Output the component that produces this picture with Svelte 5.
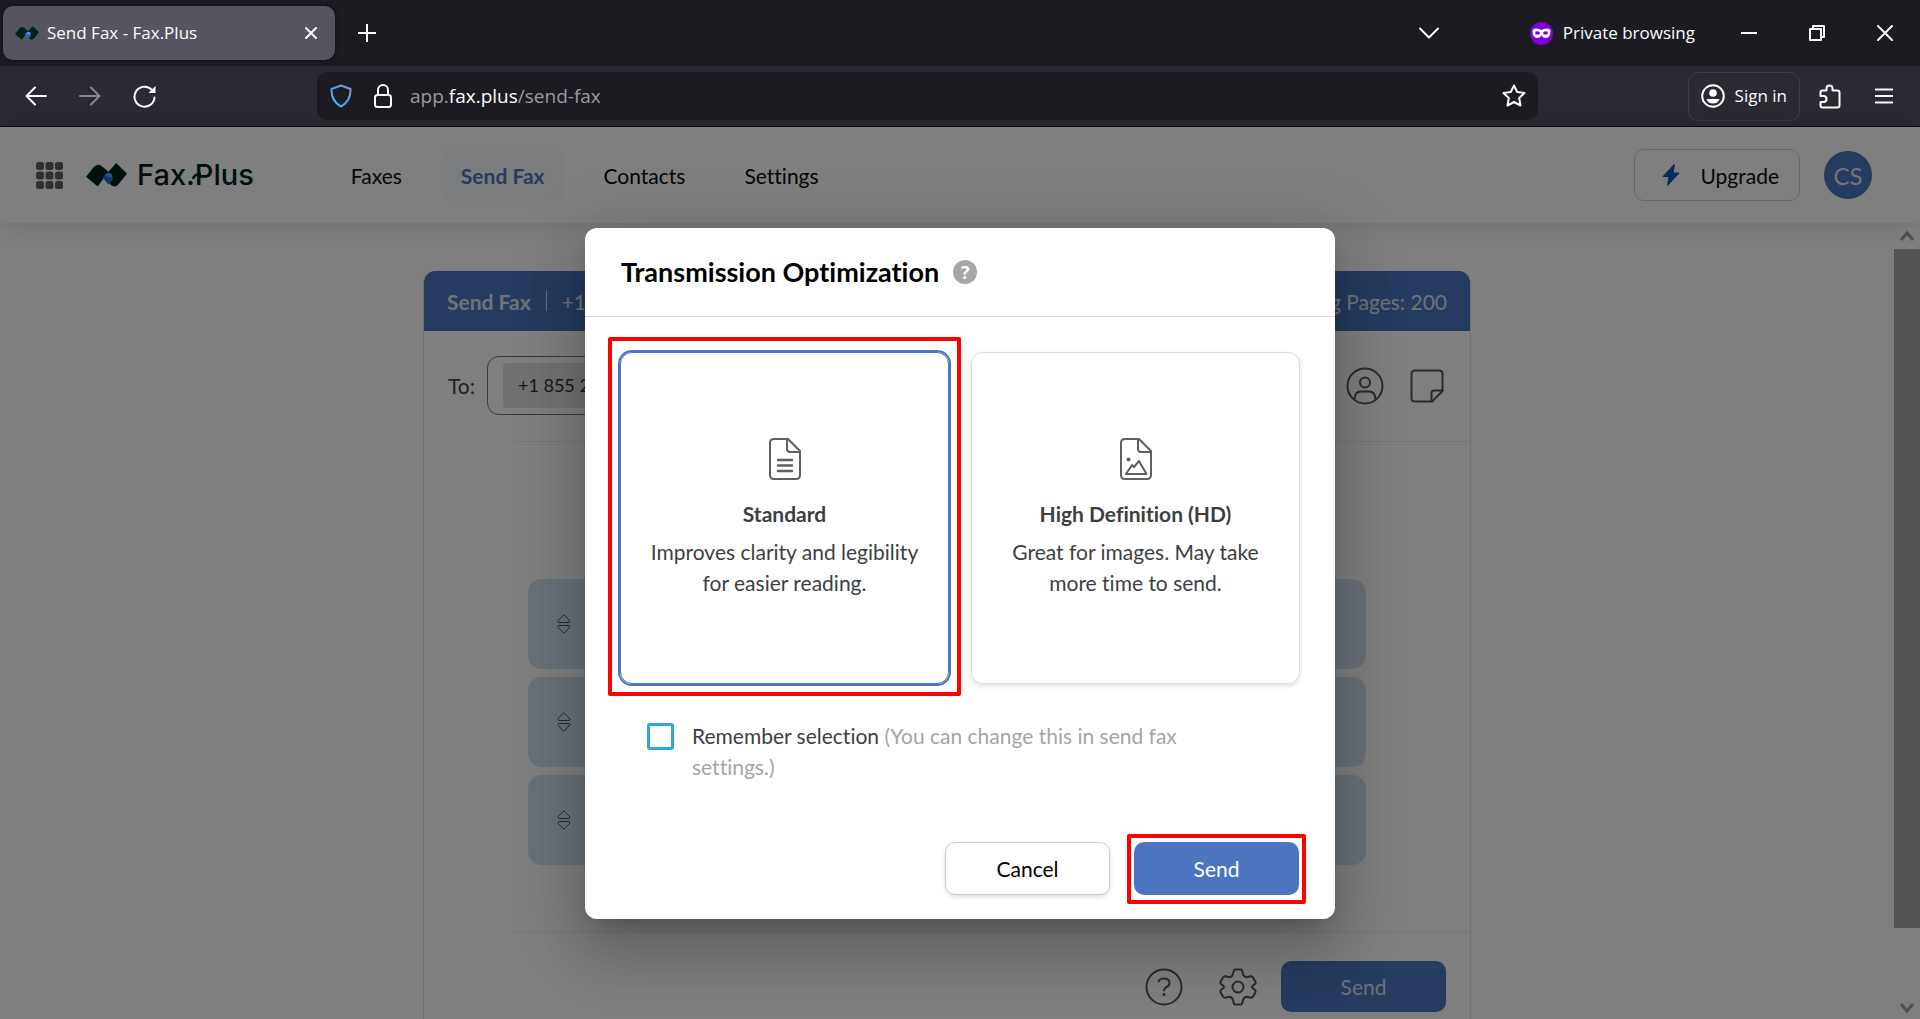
<script lang="ts">
  const navItems = ["Faxes", "Send Fax", "Contacts", "Settings"];
  const files = [1, 2, 3];

  let mode = $state("standard");
  let remember = $state(false);
</script>

{#snippet logo(width: number)}
  <svg class="logo" {width} viewBox="0 0 42 25" aria-hidden="true">
    <path d="M0 14 L8 4 Q12 0 16 3 L23 9 L12 24 Z" fill="#02211f" />
    <path d="M42 11 L31 0 L23 9 Q20 16 25 22 Q29 26 33 22 Z" fill="#02211f" />
    <path d="M17 15 Q20 10 26 11 Q29 14 27 18 L23 22 Z" fill="#2467c9" />
    <path d="M19 13 Q22 9 26 11 Q27 13 26 15 Z" fill="#57a5ec" />
  </svg>
{/snippet}

{#snippet page(kind: string)}
  <svg width="34" height="44" viewBox="0 0 34 44" fill="none" stroke="#5f6062" stroke-width="2" stroke-linecap="round" stroke-linejoin="round" aria-hidden="true">
    <path d="M6 2 H20 L32 14 V38 Q32 42 28 42 H6 Q2 42 2 38 V6 Q2 2 6 2 Z" />
    <path d="M19 2 V12 Q19 15 22 15 H32" />
    {#if kind === "standard"}
      <path d="M10 23 H24 M10 28.5 H24 M10 34 H24" stroke-width="2.4" />
    {:else}
      <path d="M7 37 L13 28 L15 30 L20 24 L27.500 37 Z" />
      <circle cx="9.500" cy="22.500" r="2" fill="#5f6062" stroke="none" />
    {/if}
  </svg>
{/snippet}

<div class="window">
  <div class="tabs">
    <div class="tab">
      {@render logo(24)}
      <span>Send Fax - Fax.Plus</span>
      <button class="tab-close" aria-label="Close tab">
        <svg width="12" height="12" viewBox="0 0 12 12"><path d="M1 1 L11 11 M11 1 L1 11" /></svg>
      </button>
    </div>
    <button class="new-tab" aria-label="New tab">
      <svg width="18" height="18" viewBox="0 0 18 18"><path d="M9 0 V18 M0 9 H18" /></svg>
    </button>
    <button class="list-tabs" aria-label="List all tabs">
      <svg width="20" height="12" viewBox="0 0 20 12"><path d="M1 1.500 L10 10.500 L19 1.500" /></svg>
    </button>
    <div class="private">
      <svg width="23" height="23" viewBox="0 0 23 23" aria-hidden="true">
        <circle cx="11.500" cy="11.500" r="11.500" fill="#8000d7" />
        <path d="M2.500 9 Q2.500 6.500 6 6.500 Q9.500 6.500 11.500 8 Q13.500 6.500 17 6.500 Q20.500 6.500 20.500 9 Q20.500 16 16 16 Q13 16 11.500 13.500 Q10 16 7 16 Q2.500 16 2.500 9 Z" fill="#fff" />
        <ellipse cx="7.500" cy="11" rx="2.400" ry="1.700" fill="#8000d7" />
        <ellipse cx="15.500" cy="11" rx="2.400" ry="1.700" fill="#8000d7" />
      </svg>
      <span>Private browsing</span>
    </div>
    <button class="win" aria-label="Minimize">
      <svg width="16" height="16" viewBox="0 0 16 16"><path d="M0 8 H16" /></svg>
    </button>
    <button class="win" aria-label="Restore">
      <svg width="16" height="16" viewBox="0 0 16 16"><path d="M1 4 H12 V15 H1 Z M4 4 V1 H15 V12 H12" /></svg>
    </button>
    <button class="win" aria-label="Close window">
      <svg width="16" height="16" viewBox="0 0 16 16"><path d="M1 1 L15 15 M15 1 L1 15" /></svg>
    </button>
  </div>

  <div class="toolbar">
    <button class="nav-btn" aria-label="Back">
      <svg width="22" height="20" viewBox="0 0 22 20"><path d="M21 10 H2 M10 1.500 L1.500 10 L10 18.500" /></svg>
    </button>
    <button class="nav-btn" disabled aria-label="Forward">
      <svg width="22" height="20" viewBox="0 0 22 20"><path d="M1 10 H20 M12 1.500 L20.500 10 L12 18.500" /></svg>
    </button>
    <button class="nav-btn" aria-label="Reload">
      <svg width="23" height="23" viewBox="0 0 23 23">
        <path d="M19 5 A10 10 0 1 0 21.500 12.500" />
        <path d="M22.500 1 V8 H15.500 Z" fill="#fff" stroke="none" />
      </svg>
    </button>
    <div class="urlbar">
      <svg width="22" height="24" viewBox="0 0 22 24" aria-hidden="true">
        <defs>
          <linearGradient id="shield" x1="1" y1="0" x2="0" y2="1">
            <stop offset="0" stop-color="#8f95d8" />
            <stop offset="0.500" stop-color="#4a9fe8" />
            <stop offset="1" stop-color="#3ec8f0" />
          </linearGradient>
        </defs>
        <path d="M11 1.500 L20.500 5 Q21 17 11 22.500 Q1 17 1.500 5 Z" stroke="url(#shield)" />
      </svg>
      <svg width="18" height="24" viewBox="0 0 18 24" aria-hidden="true">
        <rect x="1" y="11" width="16" height="12" rx="2.500" />
        <path d="M4 11 V6 A5 5 0 0 1 14 6 V11" />
      </svg>
      <a class="address" href="#send-fax">app.<b>fax.plus</b>/send-fax</a>
      <button class="star" aria-label="Bookmark this page">
        <svg width="24" height="24" viewBox="0 0 24 24">
          <path d="M12 1.500 L15.200 8 L22.500 9 L17.200 14 L18.500 21.500 L12 18 L5.500 21.500 L6.800 14 L1.500 9 L8.800 8 Z" />
        </svg>
      </button>
    </div>
    <button class="sign-in">
      <svg width="24" height="24" viewBox="0 0 24 24" aria-hidden="true">
        <circle cx="12" cy="12" r="10.800" />
        <circle cx="12" cy="9" r="3.800" fill="#fff" stroke="none" />
        <path d="M5.500 15 H18.500 Q17 19.500 12 19.500 Q7 19.500 5.500 15 Z" fill="#fff" stroke="none" />
      </svg>
      Sign in
    </button>
    <button class="tool" aria-label="Extensions">
      <svg width="22" height="25" viewBox="0 0 22 25">
        <path d="M1.500 12 V8.500 Q1.500 6.500 3.500 6.500 H7.500 V4.500 A3 3 0 0 1 13.500 4.500 V6.500 H18.500 Q20.500 6.500 20.500 8.500 V21.500 Q20.500 23.500 18.500 23.500 H3.500 Q1.500 23.500 1.500 21.500 V18 H4.500 A3 3 0 0 0 4.500 12 H1.500 Z" />
      </svg>
    </button>
    <button class="tool" aria-label="Menu">
      <svg width="18" height="16" viewBox="0 0 18 16"><path d="M0 1.500 H18 M0 8 H18 M0 14.500 H18" /></svg>
    </button>
  </div>

  <div class="viewport">
    <header>
      <button class="apps" aria-label="Apps">
        <svg width="27" height="27" viewBox="0 0 27 27" fill="#616161">
          {#each [0, 9.5, 19] as y}
            {#each [0, 9.5, 19] as x}
              <rect {x} {y} width="8" height="8" rx="2.500" />
            {/each}
          {/each}
        </svg>
      </button>
      <a class="brand" href="#home">
        {@render logo(41)}
        <span>Fax.Plus</span>
        <svg class="tail" width="9" height="8" viewBox="0 0 9 8" aria-hidden="true">
          <path d="M1 7 Q2 2 9 2" fill="none" stroke="#02211f" stroke-width="2.500" />
        </svg>
      </a>
      <nav>
        {#each navItems as item}
          <a href="#{item}" class:active={item === "Send Fax"}>{item}</a>
        {/each}
      </nav>
      <button class="upgrade">
        <svg width="18" height="22" viewBox="0 0 18 22" aria-hidden="true">
          <path d="M12 0.500 L1 12.500 H7 L5.500 21.500 L17 9 H11 L12.500 1 Z" fill="#0b57c0" stroke="#0b57c0" stroke-linejoin="round" />
        </svg>
        Upgrade
      </button>
      <button class="avatar">CS</button>
    </header>

    <div class="content">
      <main>
        <section class="panel">
          <div class="panel-head">
            <strong>Send Fax</strong><i></i><span>+1</span>
            <span class="pages">Remaining Pages: 200</span>
          </div>
          <div class="recipients">
            <span>To:</span>
            <div class="to-box"><span class="chip">+1 855 2</span></div>
            <button aria-label="Add contact">
              <svg width="38" height="38" viewBox="0 0 38 38">
                <circle cx="19" cy="19" r="17.500" />
                <circle cx="19" cy="15.500" r="5" />
                <path d="M8.500 32 Q9 24.500 15 24.500 H23 Q29 24.500 29.500 32" />
              </svg>
            </button>
            <button aria-label="Cover page">
              <svg width="34" height="34" viewBox="0 0 34 34">
                <path d="M5 1.500 H29 Q32.500 1.500 32.500 5 V22 L22 32.500 H5 Q1.500 32.500 1.500 29 V5 Q1.500 1.500 5 1.500 Z" />
                <path d="M21.500 32 V24 Q21.500 21.500 24 21.500 H32.500" />
              </svg>
            </button>
          </div>
          <div class="rule"></div>
          <ul>
            {#each files as file (file)}
              <li>
                <button aria-label="Reorder file {file}">
                  <svg width="14" height="20" viewBox="0 0 14 20">
                    <path d="M7 1 L13 7 Q13 8.500 12 8.500 H2 Q1 8.500 1 7 Z" />
                    <path d="M7 19 L13 13 Q13 11.500 12 11.500 H2 Q1 11.500 1 13 Z" />
                  </svg>
                </button>
              </li>
            {/each}
          </ul>
          <div class="rule"></div>
          <div class="panel-foot">
            <button class="icon" aria-label="Help">
              <svg width="38" height="38" viewBox="0 0 38 38">
                <circle cx="19" cy="19" r="17.500" />
                <path d="M13.500 13.500 Q14.500 10.500 19 10.500 Q24.500 10.500 24.500 15 Q24.500 17.500 21.500 19 Q19 20.300 19 22.500" />
                <circle cx="19" cy="26.500" r="1.500" fill="#555" stroke="none" />
              </svg>
            </button>
            <button class="icon" aria-label="Settings">
              <svg width="38" height="38" viewBox="0 0 38 38">
                <path d="M16 1.500 H22 Q23 1.500 23.300 3 L24 6 Q25 9.300 28 9.300 L31.500 8.300 Q33 8 34 9.500 L36.300 13.500 Q37 15 36 16 L33.500 18 Q32.800 19 33.500 20 L36 22 Q37 23 36.300 24.500 L34 28.500 Q33 30 31.500 29.700 L28 28.700 Q25 28.700 24 32 L23.300 35 Q23 36.500 22 36.500 H16 Q15 36.500 14.700 35 L14 32 Q13 28.700 10 28.700 L6.500 29.700 Q5 30 4 28.500 L1.700 24.500 Q1 23 2 22 L4.500 20 Q5.200 19 4.500 18 L2 16 Q1 15 1.700 13.500 L4 9.500 Q5 8 6.500 8.300 L10 9.300 Q13 9.300 14 6 L14.700 3 Q15 1.500 16 1.500 Z" />
                <circle cx="19" cy="19" r="5.500" />
              </svg>
            </button>
            <button class="primary">Send</button>
          </div>
        </section>
      </main>
      <div class="scrollbar" aria-hidden="true">
        <svg width="14" height="10" viewBox="0 0 14 10"><path d="M1 9 L7 2 L13 9" /></svg>
        <div class="thumb"></div>
        <svg width="14" height="10" viewBox="0 0 14 10"><path d="M1 1 L7 8 L13 1" /></svg>
      </div>
    </div>

    <div class="overlay">
      <div class="modal" role="dialog" aria-labelledby="modal-title">
        <div class="modal-head">
          <h2 id="modal-title">Transmission Optimization</h2>
          <button class="hint" aria-label="Help">?</button>
        </div>
        <div class="options">
          <label class="option marked" class:selected={mode === "standard"}>
            <input type="radio" name="mode" value="standard" bind:group={mode} />
            {@render page("standard")}
            <strong>Standard</strong>
            <span>Improves clarity and legibility for easier reading.</span>
          </label>
          <label class="option" class:selected={mode === "hd"}>
            <input type="radio" name="mode" value="hd" bind:group={mode} />
            {@render page("hd")}
            <strong>High Definition (HD)</strong>
            <span>Great for images. May take more time to send.</span>
          </label>
        </div>
        <label class="remember">
          <input type="checkbox" bind:checked={remember} />
          <span>Remember selection <small>(You can change this in send fax settings.)</small></span>
        </label>
        <div class="actions">
          <button class="secondary">Cancel</button>
          <button class="primary marked">Send</button>
        </div>
      </div>
    </div>
  </div>
</div>

<style>
  :global(body) {
    margin: 0;
  }

  * {
    box-sizing: border-box;
  }

  .window {
    --blue: #4b76bf;
    --ink: #3c3f42;
    display: flex;
    flex-direction: column;
    height: 100vh;
    overflow: hidden;
    font: 21px/31px Lato, sans-serif;
    font-variant-ligatures: none;
  }

  button {
    display: flex;
    align-items: center;
    justify-content: center;
    flex-shrink: 0;
    padding: 0;
    border: none;
    background: none;
    color: inherit;
    font: inherit;
    cursor: pointer;
  }

  a {
    color: inherit;
    text-decoration: none;
  }

  svg {
    flex-shrink: 0;
  }

  /* browser chrome */
  .tabs,
  .toolbar {
    display: flex;
    align-items: center;
    flex-shrink: 0;
    color: #fbfbfe;
    font: 17px/24px "Open Sans", sans-serif;
  }

  .tabs {
    height: 66px;
    padding: 0 1px 0 3px;
    background: #1c1b22;
  }

  .tabs button svg,
  .toolbar svg {
    fill: none;
    stroke: #fbfbfe;
    stroke-width: 2;
    stroke-linejoin: round;
    stroke-linecap: round;
  }

  .tab {
    display: flex;
    align-items: center;
    width: 332px;
    height: 54px;
    padding: 0 18px 0 12px;
    gap: 8px;
    border-radius: 10px;
    background: #56545f;
    box-shadow: 0 0 4px #0008;
  }

  .tab-close {
    margin-left: auto;
  }

  .new-tab {
    width: 64px;
    height: 54px;
  }

  .list-tabs {
    margin-left: auto;
    margin-right: 91px;
  }

  .private {
    display: flex;
    align-items: center;
    gap: 10px;
    margin-right: 20px;
  }

  .tabs .win {
    width: 68px;
    height: 66px;
  }

  .toolbar {
    height: 61px;
    padding: 0 9px;
    border-bottom: 1px solid #0c0c0d;
    background: #2b2a33;
  }

  .nav-btn {
    width: 54px;
    height: 48px;
  }

  .nav-btn:disabled {
    opacity: 0.45;
  }

  .urlbar {
    display: flex;
    align-items: center;
    flex: 1;
    height: 48px;
    margin: 0 150px 0 146px;
    padding: 0 12px 0 13px;
    gap: 22px;
    border-radius: 10px;
    background: #1c1b22;
  }

  .address {
    flex: 1;
    margin-left: -4px;
    color: #9a9aa2;
    font-size: 19px;
  }

  .address b {
    color: #fbfbfe;
    font-weight: 400;
  }

  .sign-in {
    height: 49px;
    margin-right: 3px;
    padding: 0 12px;
    gap: 10px;
    border: 1px solid #3f3e48;
    border-radius: 10px;
  }

  .tool {
    width: 54px;
    height: 48px;
  }

  /* page */
  .viewport {
    position: relative;
    display: flex;
    flex-direction: column;
    flex: 1;
    min-height: 0;
    background: #fff;
  }

  header {
    position: relative;
    display: flex;
    align-items: center;
    flex-shrink: 0;
    height: 96px;
    padding: 0 48px 0 36px;
    box-shadow: 0 2px 24px #0002;
    color: #0c0c0c;
  }

  .brand {
    position: relative;
    display: flex;
    align-items: center;
    margin-left: 23px;
    gap: 10px;
    color: #02211f;
    font: 500 29px/40px Inter, sans-serif;
  }

  .tail {
    position: absolute;
    left: 106px;
    top: 17px;
  }

  nav {
    display: flex;
    margin-left: 78px;
    gap: 21px;
  }

  nav a {
    padding: 10px 19px;
    border-radius: 8px;
  }

  nav .active {
    background: #f7fafd;
    color: var(--blue);
    font-weight: 700;
  }

  .upgrade {
    height: 52px;
    margin-left: auto;
    padding: 0 20px 0 27px;
    gap: 20px;
    border: 1px solid #d0d0d0;
    border-radius: 10px;
  }

  .avatar {
    width: 48px;
    height: 48px;
    margin-left: 24px;
    border-radius: 50%;
    background: var(--blue);
    color: #e4e9f2;
    font-size: 24px;
  }

  .content {
    display: flex;
    flex: 1;
    min-height: 0;
  }

  main {
    flex: 1;
    padding-top: 48px;
    overflow: hidden;
  }

  .panel {
    max-width: 1048px;
    min-height: 100%;
    margin: 0 auto;
    border: 1px solid #e2e2e2;
    border-top: none;
    border-radius: 12px 12px 0 0;
    color: #444;
    overflow: hidden;
  }

  .panel-head {
    display: flex;
    align-items: center;
    height: 60px;
    padding: 0 23px;
    gap: 15px;
    background: var(--blue);
    color: #e1e7f1;
  }

  .panel-head i {
    width: 1px;
    height: 20px;
    background: #d4dced;
  }

  .pages {
    margin-left: auto;
  }

  .recipients {
    display: flex;
    align-items: center;
    padding: 25px 24px 26px;
  }

  .to-box {
    display: flex;
    align-items: center;
    flex: 1;
    height: 59px;
    margin: 0 20px 0 12px;
    padding: 0 15px;
    border: 1px solid #777;
    border-radius: 12px;
  }

  .chip {
    width: 200px;
    padding: 7px 15px;
    border-radius: 4px;
    background: #e4e4e4;
    color: #333;
    font-size: 18px;
  }

  .recipients button {
    width: 38px;
    margin-left: 24px;
  }

  .panel svg {
    fill: none;
    stroke: #555;
    stroke-width: 2;
    stroke-linejoin: round;
    stroke-linecap: round;
  }

  .rule {
    height: 1px;
    margin-left: 90px;
    background: #ececec;
  }

  ul {
    display: flex;
    flex-direction: column;
    margin: 0;
    padding: 137px 104px 66px;
    gap: 8px;
    list-style: none;
  }

  li {
    display: flex;
    align-items: center;
    height: 90px;
    padding-left: 29px;
    border-radius: 14px;
    background: #d3e3f3;
  }

  .panel li svg {
    stroke-width: 1;
  }

  .panel-foot {
    display: flex;
    align-items: center;
    justify-content: flex-end;
    padding: 29px 24px;
    gap: 24px;
  }

  .icon:first-child {
    margin-right: 12px;
  }

  .primary,
  .secondary {
    position: relative;
    width: 165px;
    height: 53px;
    border-radius: 10px;
  }

  .primary {
    background: var(--blue);
    color: #fff;
  }

  .panel .primary {
    height: 51px;
    color: #dde3ee;
  }

  .secondary {
    border: 1px solid #ccc;
    box-shadow: 0 2px 4px #0002;
    color: #000;
  }

  .scrollbar {
    display: flex;
    flex-direction: column;
    align-items: center;
    justify-content: space-between;
    width: 26px;
    padding: 8px 0 6px;
  }

  .scrollbar svg {
    fill: none;
    stroke: #a0a0a0;
    stroke-width: 3;
  }

  .scrollbar .thumb {
    width: 100%;
    height: 679px;
    margin: 8px 0 auto;
    background: #a8a8a8;
  }

  /* dialog */
  .overlay {
    position: absolute;
    inset: 0;
    display: flex;
    align-items: center;
    justify-content: center;
    background: rgb(0 0 0 / 0.5);
  }

  .modal {
    width: 750px;
    border-radius: 12px;
    background: #fff;
    box-shadow:
      0 16px 22px -10px rgb(0 0 0 / 0.2),
      0 36px 57px 4px rgb(0 0 0 / 0.14),
      0 13px 69px 12px rgb(0 0 0 / 0.12);
    color: var(--ink);
  }

  .modal-head {
    display: flex;
    align-items: center;
    height: 89px;
    padding: 0 36px;
    gap: 14px;
    border-bottom: 1px solid #d9dadc;
  }

  h2 {
    margin: 0;
    color: #000;
    font-size: 27px;
    font-weight: 700;
  }

  .hint {
    width: 24px;
    height: 24px;
    border-radius: 50%;
    background: #a6a6a6;
    color: #fff;
    font: 700 18px/24px "Open Sans", sans-serif;
  }

  .options {
    display: grid;
    grid-template-columns: 1fr 1fr;
    gap: 22px;
    padding: 35px 35px 36px;
  }

  .option {
    position: relative;
    display: flex;
    flex-direction: column;
    align-items: center;
    justify-content: center;
    min-height: 332px;
    padding: 0 28px 1px;
    border: 1px solid #dcdcdc;
    border-radius: 12px;
    box-shadow: 0 2px 5px #0002;
    text-align: center;
    cursor: pointer;
  }

  .option.selected {
    border-color: var(--blue);
    box-shadow: 0 0 0 2px var(--blue);
  }

  .option input {
    position: absolute;
    opacity: 0;
  }

  .option strong {
    margin: 17px 0 7px;
  }

  .marked::after {
    content: "";
    position: absolute;
    border: 4px solid #f00;
    border-radius: 2px;
  }

  .option.marked::after {
    inset: -16px -13px -13px;
  }

  .primary.marked::after {
    inset: -8px -7px -9px;
  }

  .remember {
    display: flex;
    align-items: flex-start;
    padding: 0 90px 0 62px;
    gap: 18px;
  }

  .remember input {
    flex-shrink: 0;
    width: 27px;
    height: 27px;
    margin: 3px 0 0;
    appearance: none;
    border: 3px solid #2ea3e8;
    border-radius: 3px;
  }

  .remember small {
    color: #a3a5a7;
    font-size: inherit;
  }

  .actions {
    display: flex;
    justify-content: flex-end;
    padding: 60px 36px 24px;
    gap: 24px;
  }
</style>
